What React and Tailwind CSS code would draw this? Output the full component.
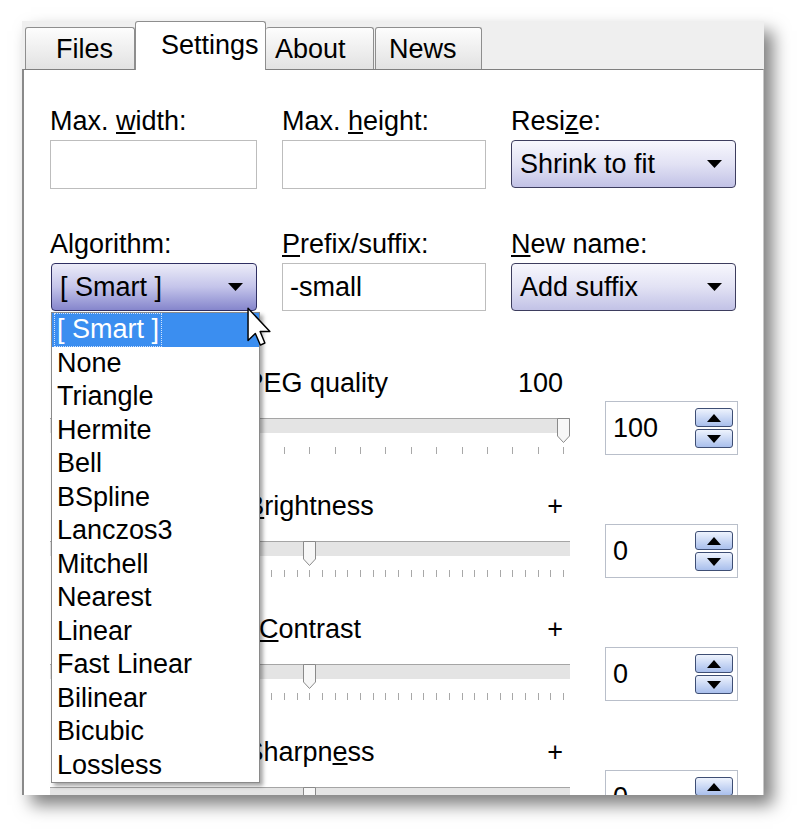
import React from 'react';

const algorithms = ['[ Smart ]', 'None', 'Triangle', 'Hermite', 'Bell', 'BSpline', 'Lanczos3', 'Mitchell', 'Nearest', 'Linear', 'Fast Linear', 'Bilinear', 'Bicubic', 'Lossless'];

function Arrow() {
    return (
        <svg width="15" height="8" viewBox="0 0 15 8" className="shrink-0">
            <path d="M0 0 H15 L7.5 8 Z" fill="#000" />
        </svg>
    );
}

function TextBox({ value }) {
    return (
        <div className="h-full border border-[#bdbdbd] bg-white flex items-center pl-[7px]">{value}</div>
    );
}

function Combo({ value, focused }) {
    return (
        <div
            className={
                focused
                    ? 'h-full rounded-[4px] border border-[#2f2f62] bg-gradient-to-b from-[#ececf8] via-[#c4c4ea] to-[#8686cc] flex items-center justify-between pl-[8px] pr-[13px]'
                    : 'h-full rounded-[4px] border border-[#3d3d5e] bg-gradient-to-b from-[#f7f7fd] via-[#e2e2f4] to-[#c2c2e6] flex items-center justify-between pl-[8px] pr-[13px]'
            }
        >
            <span>{value}</span>
            <Arrow />
        </div>
    );
}

function Field({ label, children, className }) {
    return (
        <div className={className}>
            <div className="leading-[30px] h-[30px] whitespace-nowrap">{label}</div>
            {children}
        </div>
    );
}

function Thumb() {
    return (
        <svg width="13" height="25" viewBox="0 0 13 25">
            <path d="M0.5 0.5 H12.5 V18 L6.5 24.5 L0.5 18 Z" fill="#f7f7f7" stroke="#8a8a8a" />
        </svg>
    );
}

function SpinButton({ up }) {
    return (
        <div className="h-[19px] w-[38px] rounded-[3px] border border-[#3e4e74] bg-gradient-to-b from-[#eef3fd] to-[#a9bfec] flex items-center justify-center">
            <svg width="14" height="8" viewBox="0 0 14 8">
                {up ? <path d="M0 8 H14 L7 0 Z" fill="#000" /> : <path d="M0 0 H14 L7 8 Z" fill="#000" />}
            </svg>
        </div>
    );
}

// the left end label ("0" / "-") sits under the open dropdown, so it is not drawn
function SliderRow({ title, right, value, thumbLeft, ticks }) {
    return (
        <div className="h-[123px] grid grid-cols-[520px_133px] gap-x-[35px] shrink-0">
            <div>
                <div className="h-[30px] leading-[30px] flex">
                    <div className="w-[60px]" />
                    <div className="flex-1 text-center whitespace-nowrap">{title}</div>
                    <div className="w-[60px] text-right pr-[7px]">{right}</div>
                </div>
                <div className="relative mt-[20px] h-[15px] border-t border-[#a5a5a5] bg-[#e4e4e4]">
                    <div className="absolute top-[-1px]" style={{ left: thumbLeft }}>
                        <Thumb />
                    </div>
                </div>
                <div className="mt-[14px] h-[7px] px-[6px] flex justify-between">
                    {Array.from({ length: ticks }).map((_, i) => (
                        <div key={i} className="w-px h-full bg-[#a8a8a8]" />
                    ))}
                </div>
            </div>
            <div className="mt-[33px] h-[54px] border border-[#b9bfca] bg-white flex items-center justify-between pl-[7px] pr-[4px]">
                <span>{value}</span>
                <div className="flex flex-col gap-[2px]">
                    <SpinButton up />
                    <SpinButton />
                </div>
            </div>
        </div>
    );
}

export default function App() {
    return (
        <div className="min-h-screen bg-white pt-[21px] pl-[22px] font-['Liberation_Sans',Arial,sans-serif] text-[27px] text-black">
            <div className="relative w-[742px] h-[774px] bg-[#efefef] flex flex-col shadow-[9px_10px_16px_rgba(0,0,0,0.5)]">
                {/* Tabs */}
                <div className="h-[48px] shrink-0 flex items-end pl-[3px]">
                    <div className="w-[110px] h-[42px] pl-[30px] pt-[6px] leading-[30px] border border-b-0 border-[#8e8e8e] rounded-t-[3px] bg-gradient-to-b from-[#fdfdfd] to-[#e2e2e2]">Files</div>
                    <div className="relative z-10 -mb-px w-[131px] h-[49px] pl-[25px] pt-[8px] leading-[30px] border border-b-0 border-[#8e8e8e] rounded-t-[3px] bg-white">Settings</div>
                    <div className="w-[108px] h-[42px] pl-[9px] pt-[6px] leading-[30px] border border-b-0 border-l-0 border-[#8e8e8e] rounded-t-[3px] bg-gradient-to-b from-[#fdfdfd] to-[#e2e2e2]">About</div>
                    <div className="ml-px w-[107px] h-[42px] pl-[13px] pt-[6px] leading-[30px] border border-b-0 border-[#8e8e8e] rounded-t-[3px] bg-gradient-to-b from-[#fdfdfd] to-[#e2e2e2]">News</div>
                </div>

                {/* Panel */}
                <div className="flex-1 min-h-0 overflow-hidden bg-white border-t border-l-2 border-r border-t-[#7f7f7f] border-l-[#8a8a8a] border-r-[#c8c8c8] pl-[26px] pt-[36px]">
                    <div className="grid grid-cols-[207px_204px_225px] gap-x-[25px]">
                        <Field label={<>Max. <u className="underline-offset-2">w</u>idth:</>}>
                            <div className="mt-[4px] h-[49px]"><TextBox value="" /></div>
                        </Field>
                        <Field label={<>Max. <u className="underline-offset-2">h</u>eight:</>}>
                            <div className="mt-[4px] h-[49px]"><TextBox value="" /></div>
                        </Field>
                        <Field label={<>Resi<u className="underline-offset-2">z</u>e:</>}>
                            <div className="mt-[4px] h-[48px]"><Combo value="Shrink to fit" /></div>
                        </Field>
                    </div>

                    <div className="mt-[40px] grid grid-cols-[207px_204px_225px] gap-x-[25px]">
                        <Field label="Algorithm:">
                            <div className="mt-[4px] h-[48px] ml-px"><Combo value="[ Smart ]" focused /></div>
                        </Field>
                        <Field label={<><u className="underline-offset-2">P</u>refix/suffix:</>}>
                            <div className="mt-[4px] h-[48px]"><TextBox value="-small" /></div>
                        </Field>
                        <Field label={<><u className="underline-offset-2">N</u>ew name:</>}>
                            <div className="mt-[4px] h-[48px]"><Combo value="Add suffix" /></div>
                        </Field>
                    </div>

                    <div className="mt-[57px] flex flex-col">
                        <SliderRow title={<><u className="underline-offset-2">J</u>PEG quality</>} right="100" value="100" thumbLeft={507} ticks={21} />
                        <SliderRow title={<><u className="underline-offset-2">B</u>rightness</>} right="+" value="0" thumbLeft={253} ticks={41} />
                        <SliderRow title={<><u className="underline-offset-2">C</u>ontrast</>} right="+" value="0" thumbLeft={253} ticks={41} />
                        <SliderRow title={<>Sharpn<u className="underline-offset-2">e</u>ss</>} right="+" value="0" thumbLeft={253} ticks={41} />
                    </div>
                </div>

                {/* Open dropdown list */}
                <div className="absolute z-20 left-[29px] top-[291px] w-[209px] h-[471px] bg-white border border-[#8a8a8a] shadow-[3px_3px_4px_rgba(0,0,0,0.35)] flex flex-col">
                    {algorithms.map((a, i) => (
                        <div
                            key={a}
                            className={i === 0 ? 'h-[33.5px] leading-[33.5px] bg-[#3b8ef0] text-white px-[2px]' : 'h-[33.5px] leading-[33.5px] px-[5px]'}
                        >
                            {i === 0 ? <span className="inline-block h-full px-[3px] outline-1 outline-dotted outline-[#cfe3ff] -outline-offset-1">{a}</span> : a}
                        </div>
                    ))}
                </div>

                {/* Mouse cursor */}
                <svg className="absolute z-30 left-[225px] top-[286px]" width="26" height="41" viewBox="0 0 12.5 19.5">
                    <path d="M0.5 0.5 L0.5 16 L4 12.6 L6.4 18.2 L8.6 17.2 L6.3 11.7 L11 11.7 Z" fill="#fff" stroke="#000" strokeWidth="0.7" strokeLinejoin="round" />
                </svg>
            </div>
        </div>
    );
}
